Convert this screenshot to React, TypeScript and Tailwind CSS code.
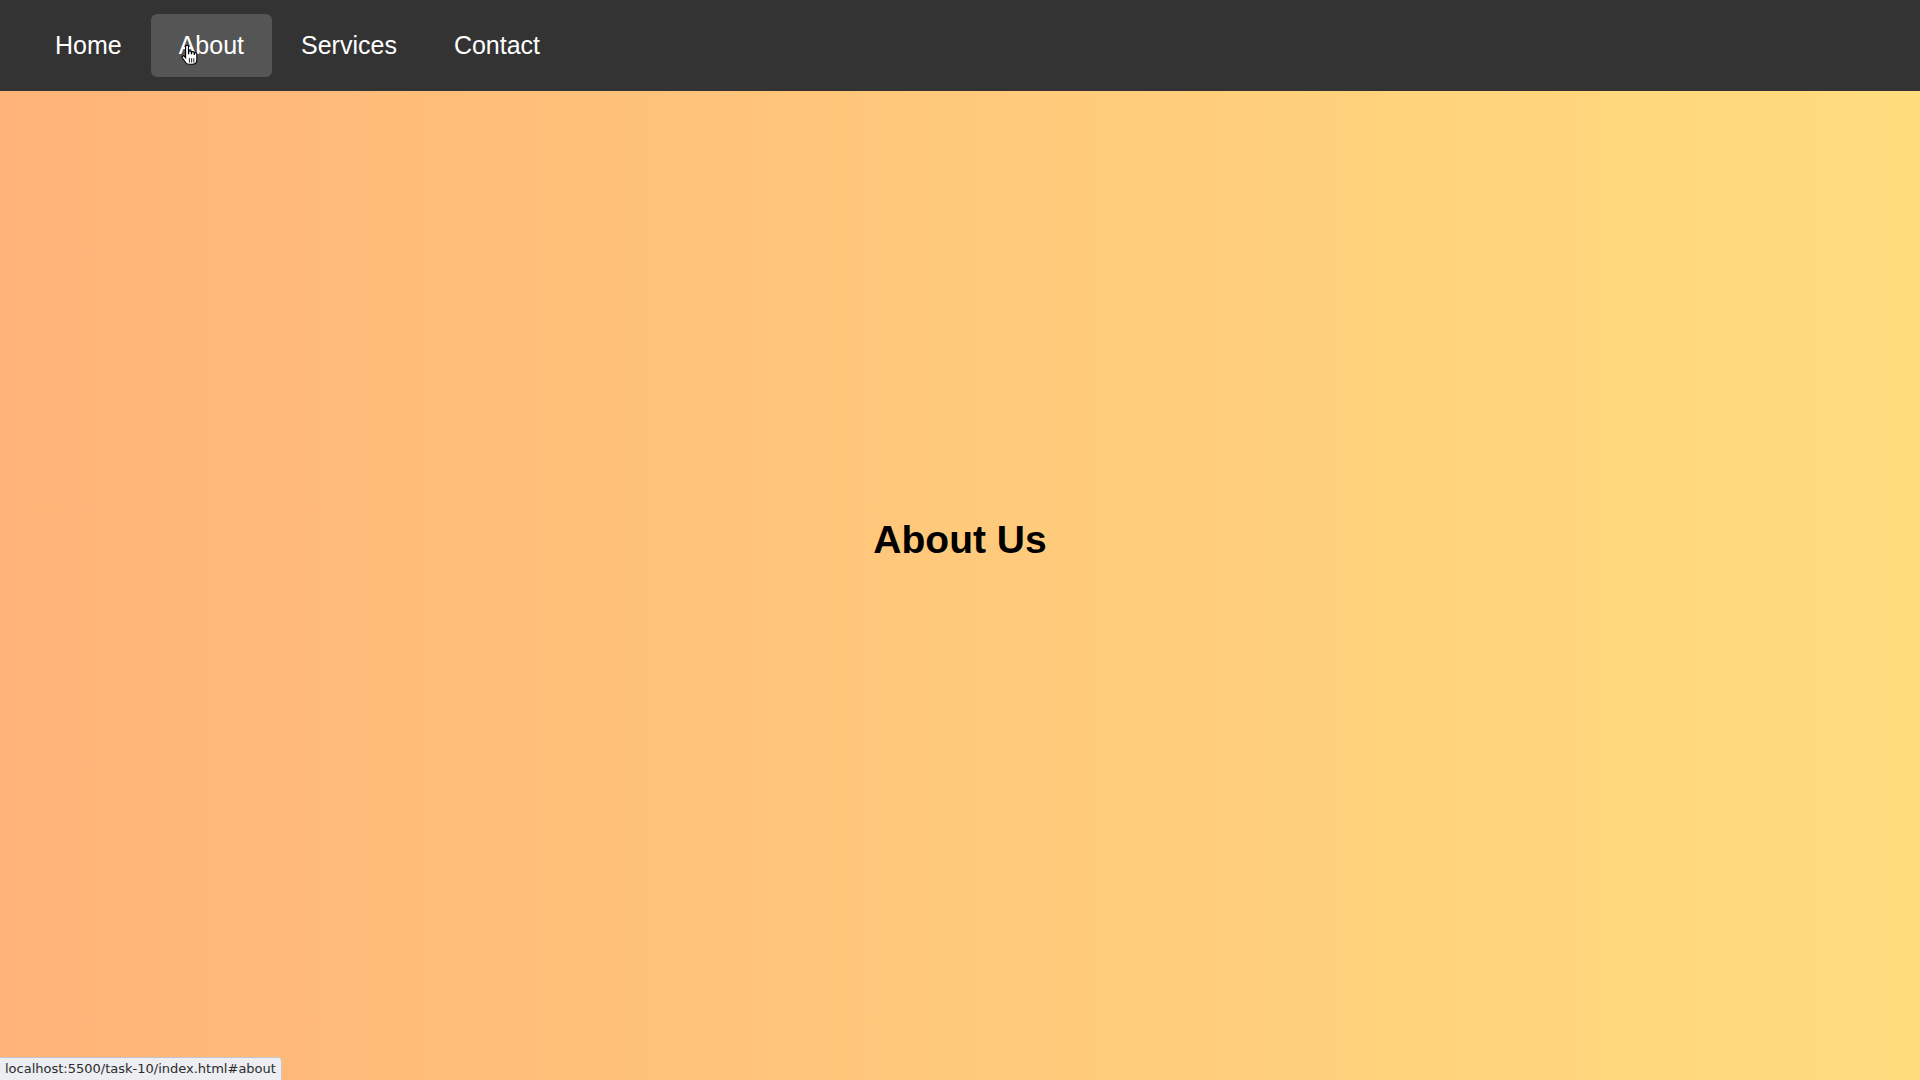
import React from "react";

const links = ["Home", "About", "Services", "Contact"];

export default function App() {
  return (
    <div className="relative min-h-screen w-full font-['Liberation_Sans',Arial,sans-serif]">
      <nav className="fixed top-0 left-0 right-0 z-10 flex h-[91px] items-center bg-[#333333] pl-[27px]">
        <ul className="flex gap-[1px]">
          {links.map((l) => (
            <li key={l}>
              <a
                href={"#" + l.toLowerCase()}
                className={
                  "block rounded-[6px] px-[28px] py-[18px] text-[25px] leading-[27px] text-white " +
                  (l === "About" ? "bg-[#555555]" : "")
                }
              >
                {l}
              </a>
            </li>
          ))}
        </ul>
      </nav>
      <section className="flex h-screen w-full items-center justify-center bg-gradient-to-r from-[#ffb378] via-[#ffc97b] to-[#ffdd7d]">
        <h1 className="text-[39px] font-bold leading-tight text-black">About Us</h1>
      </section>
      <svg
        className="pointer-events-none absolute left-[181px] top-[45px] z-20"
        width="18"
        height="22"
        viewBox="0 0 16 20"
      >
        <path
          d="M4 1.5c0-.8.6-1.3 1.3-1.3S6.6.7 6.6 1.5V8h.2V6.6c0-.7.6-1.2 1.2-1.2s1.2.5 1.2 1.2V8h.2V7.2c0-.7.6-1.2 1.2-1.2s1.2.5 1.2 1.2V8.6h.2V8c0-.7.5-1.1 1.1-1.1s1.1.4 1.1 1.1v5.5c0 2.3-1.4 4-3.6 4H7.1c-1.4 0-2.3-.6-3-1.6L1.1 11.8c-.5-.7-.3-1.4.3-1.8.6-.3 1.2-.1 1.6.4L4 11.6V1.5z"
          fill="#ffffff"
          stroke="#000000"
          strokeWidth="1"
        />
        <path d="M7.5 12v4M9.5 12v4M11.5 12v4" stroke="#000" strokeWidth="0.8" />
      </svg>
      <div className="fixed bottom-0 left-0 z-20 rounded-tr-[4px] border-t border-r border-[#c4c6cb] bg-[#eceef2] px-[5px] py-[2px] font-['DejaVu_Sans',sans-serif] text-[13px] leading-[18px] text-[#2b2b2b]">
        localhost:5500/task-10/index.html#about
      </div>
    </div>
  );
}
